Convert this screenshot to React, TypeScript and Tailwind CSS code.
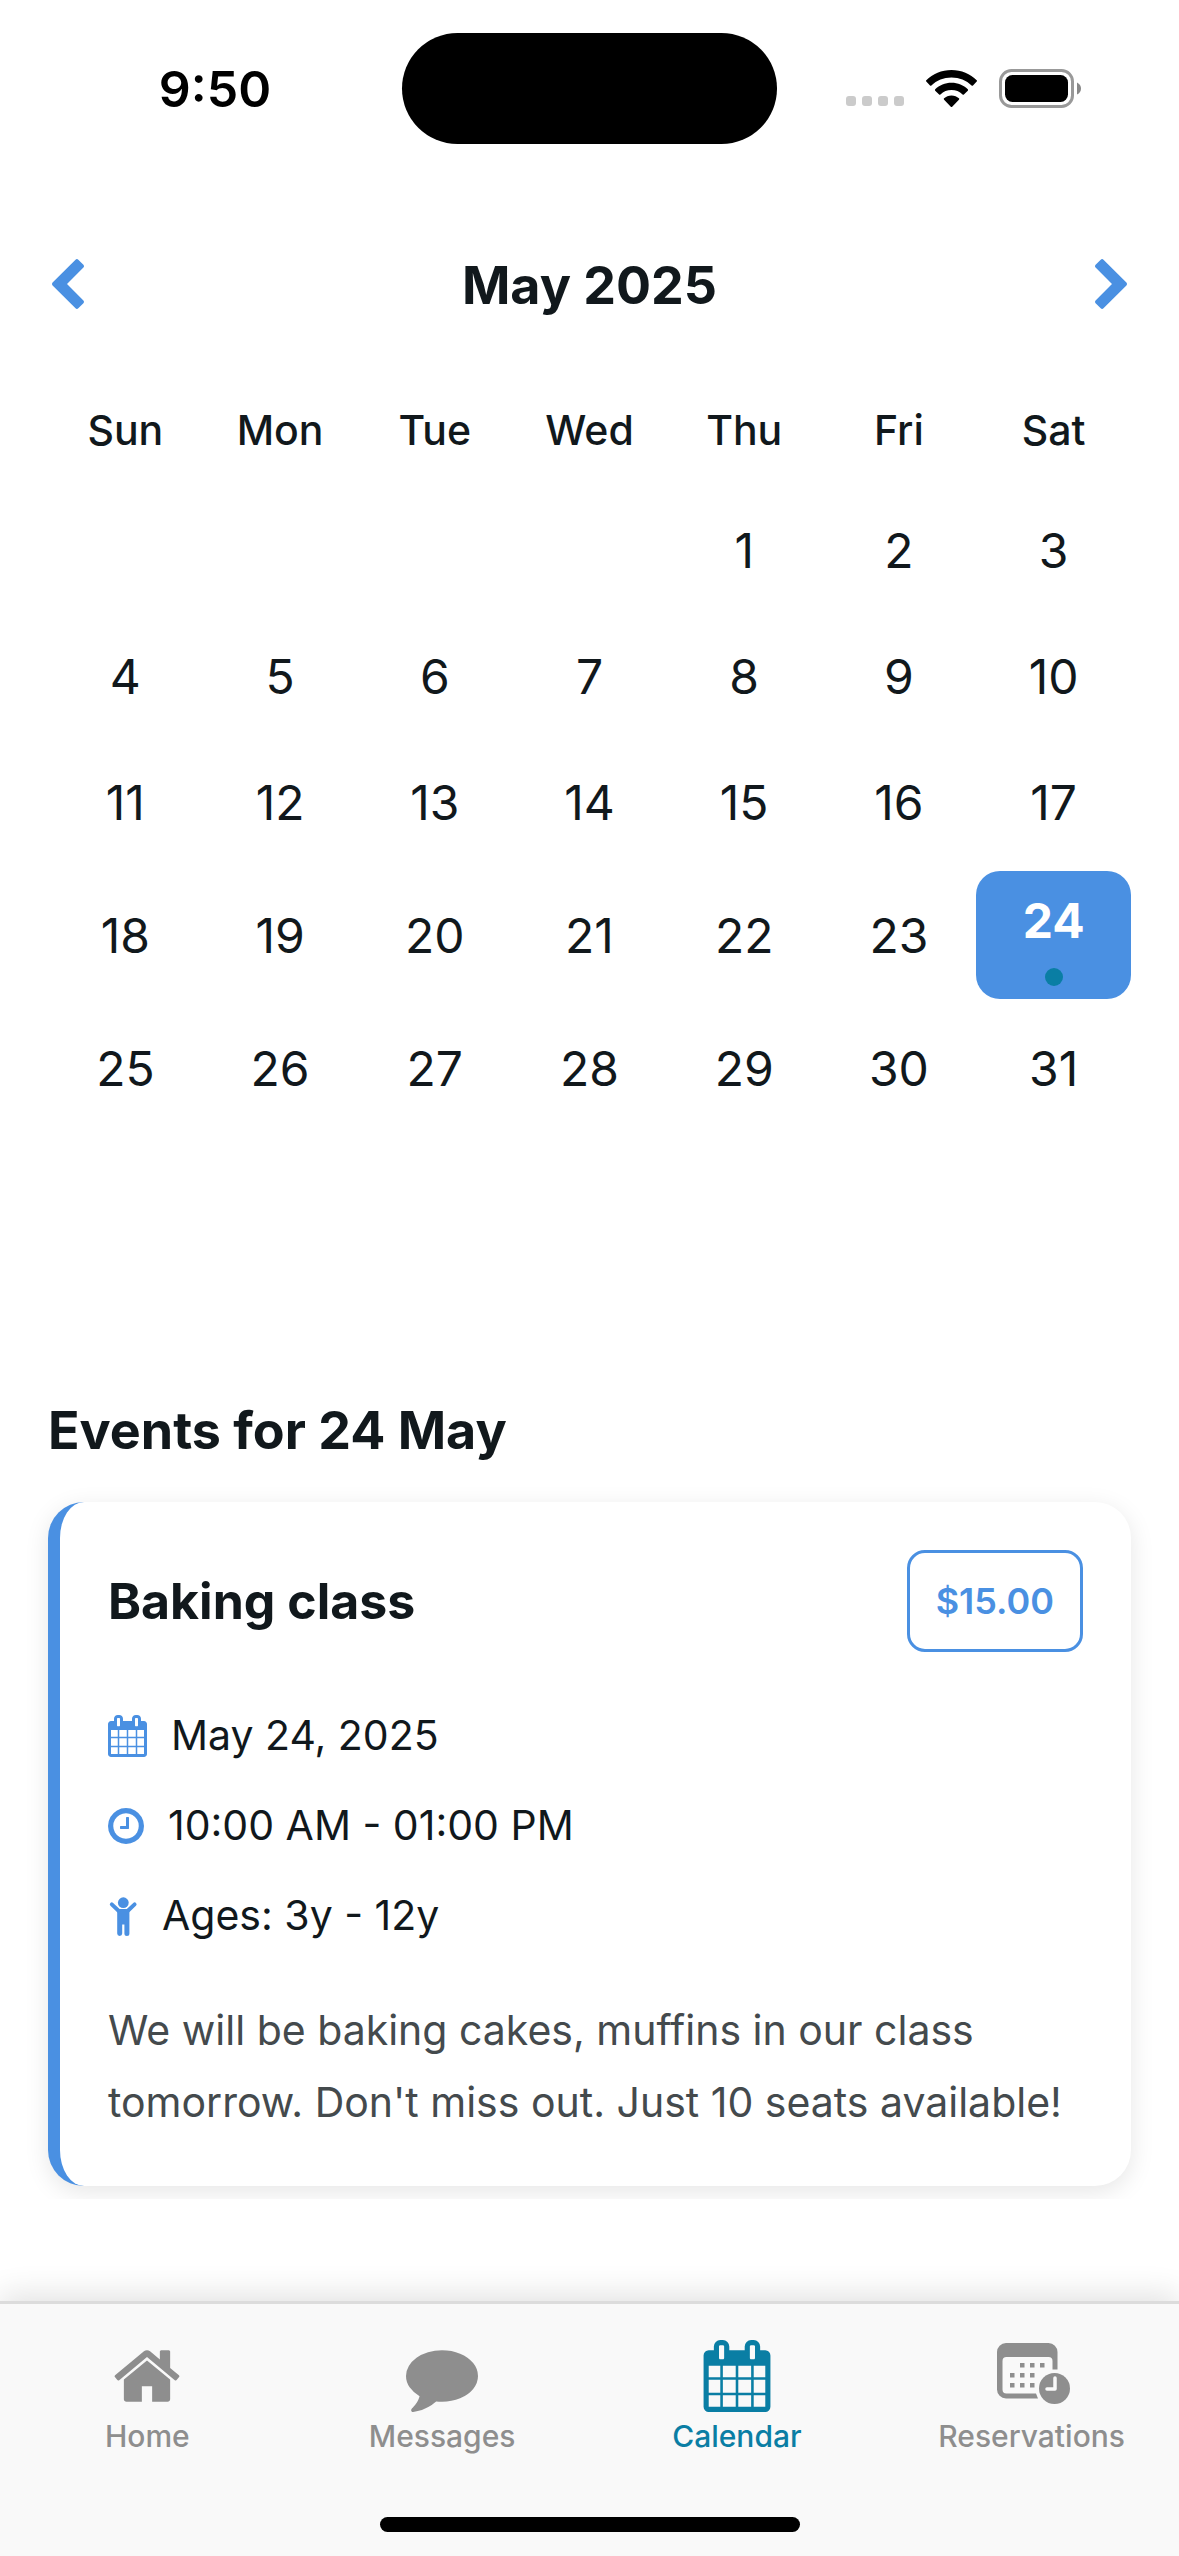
import type { ReactNode } from "react";

const weekdays = ["Sun", "Mon", "Tue", "Wed", "Thu", "Fri", "Sat"];
const firstWeekday = 4;
const daysInMonth = 31;
const selectedDay = 24;

const cells: (number | null)[] = [
  ...Array.from({ length: firstWeekday }, () => null),
  ...Array.from({ length: daysInMonth }, (_, i) => i + 1),
];

const CALENDAR =
  "M192 1664h288v-288h-288v288zm352 0h320v-288h-320v288zm-352-352h288v-320h-288v320zm352 0h320v-320h-320v320zm-352-384h288v-288h-288v288zm736 736h320v-288h-320v288zm-384-736h320v-288h-320v288zm768 736h288v-288h-288v288zm-384-352h320v-320h-320v320zm-352-864v-288q0-13-9.5-22.5t-22.5-9.5h-64q-13 0-22.5 9.5t-9.5 22.5v288q0 13 9.5 22.5t22.5 9.5h64q13 0 22.5-9.5t9.5-22.5zm736 864h288v-320h-288v320zm-384-384h320v-288h-320v288zm384 0h288v-288h-288v288zm32-480v-288q0-13-9.5-22.5t-22.5-9.5h-64q-13 0-22.5 9.5t-9.5 22.5v288q0 13 9.5 22.5t22.5 9.5h64q13 0 22.5-9.5t9.5-22.5zm384-64v1280q0 52-38 90t-90 38h-1408q-52 0-90-38t-38-90v-1280q0-52 38-90t90-38h128v-96q0-66 47-113t113-47h64q66 0 113 47t47 113v96h384v-96q0-66 47-113t113-47h64q66 0 113 47t47 113v96h128q52 0 90 38t38 90z";
const HOME =
  "M1472 992v480q0 26-19 45t-45 19h-384v-384h-256v384h-384q-26 0-45-19t-19-45v-480q0-1 .5-3t.5-3l575-474 575 474q1 2 1 6zm223-69l-62 74q-8 9-21 11h-3q-13 0-21-7l-692-577-692 577q-12 8-24 7-13-2-21-11l-62-74q-8-10-7-23.5t11-21.5l719-599q32-26 76-26t76 26l244 204v-195q0-14 9-23t23-9h192q14 0 23 9t9 23v408l219 182q10 8 11 21.5t-7 23.5z";
const COMMENT =
  "M1792 896q0 174-120 321.5t-326 233-450 85.5q-70 0-145-8-198 175-460 242-49 14-114 22-17 2-30.5-9t-17.5-29v-1q-3-4-.5-12t2-10 4.5-9.5l6-9 7-8.5 8-9q7-8 31-34.5t34.5-38 31-39.5 32.5-51 27-59 26-76q-157-89-247.5-220t-90.5-281q0-130 71-248.5t191-204.5 286-136.5 348-50.5q244 0 450 85.5t326 233 120 321.5z";
const CLOCK =
  "M1024 544v448q0 14-9 23t-23 9h-320q-14 0-23-9t-9-23v-64q0-14 9-23t23-9h224v-352q0-14 9-23t23-9h64q14 0 23 9t9 23zm416 352q0-148-73-273t-198-198-273-73-273 73-198 198-73 273 73 273 198 198 273 73 273-73 198-198 73-273zm224 0q0 209-103 385.5t-279.5 279.5-385.5 103-385.5-103-279.5-279.5-103-385.5 103-385.5 279.5-279.5 385.5-103 385.5 103 279.5 279.5 103 385.5z";
const CHEVRON_LEFT =
  "M1427 301l-531 531 531 531q19 19 19 45t-19 45l-166 166q-19 19-45 19t-45-19l-742-742q-19-19-19-45t19-45l742-742q19-19 45-19t45 19l166 166q19 19 19 45t-19 45z";

function Chevron({ flip = false }: { flip?: boolean }) {
  return (
    <svg viewBox="410 26 1036 1612" fill="currentColor" className={flip ? "h-[50px] w-8 -scale-x-100" : "h-[50px] w-8"} aria-hidden="true">
      <path d={CHEVRON_LEFT} />
    </svg>
  );
}

function ChildIcon() {
  return (
    <svg viewBox="0 0 30 42" className="h-[42px] w-[30px]" fill="currentColor" aria-hidden="true">
      <circle cx="15.300" cy="7.700" r="5.400" />
      <path
        d="M3.800 9.300 L10.800 16 H19.600 L26.600 9.300"
        fill="none"
        stroke="currentColor"
        strokeWidth="3.900"
        strokeLinecap="round"
        strokeLinejoin="round"
      />
      <path d="M9.200 14.200h12.200V38.500a2.500 2.500 0 0 1-5 0V29.500h-2.200V38.500a2.500 2.500 0 0 1-5 0z" />
    </svg>
  );
}

function ReservationIcon() {
  return (
    <svg viewBox="-4 0 78 72" className="h-[72px] w-[78px]" fill="currentColor" aria-hidden="true">
      <path
        fillRule="evenodd"
        d="M9 3h42.500a9 9 0 0 1 9 9v17.500h-5V21a4 4 0 0 0-4-4H9.500a4 4 0 0 0-4 4v28.500a4 4 0 0 0 4 4h29.500l2 5H9a9 9 0 0 1-9-9V12a9 9 0 0 1 9-9z"
      />
      <path d="M23 23h4.500v4.500H23zM33 23h4.500v4.500H33zM43 23h4.500v4.500H43zM13 33h4.500v4.500H13zM23 33h4.500v4.500H23zM33 33h4.500v4.500H33zM13 43h4.500v4.500H13zM23 43h4.500v4.500H23zM33 43h4.500v4.500H33z" />
      <circle cx="57.500" cy="48.500" r="15.500" />
      <path d="M58 38v11h-8" fill="none" stroke="#f9f9f9" strokeWidth="3.500" strokeLinecap="round" strokeLinejoin="round" />
    </svg>
  );
}

function TabGlyph({ d }: { d: string }) {
  return (
    <svg viewBox="0 0 1792 1792" className="size-[72px]" fill="currentColor" aria-hidden="true">
      <path d={d} />
    </svg>
  );
}

function StatusBar() {
  return (
    <header className="grid grid-cols-[1fr_375px_1fr] items-center pt-[33px] text-black">
      <div className="pl-7 text-center text-[50px] leading-[60px] font-semibold">9:50</div>
      <div className="h-[111px] rounded-full bg-black" />
      <div className="flex items-center justify-end gap-[22px] pr-[98px]">
        <div className="flex gap-1.5 pt-6">
          {[0, 1, 2, 3].map((i) => (
            <span key={i} className="size-[10px] rounded-[3px] bg-[#cbcbcb]" />
          ))}
        </div>
        <svg viewBox="0 0 51 37" className="h-[37px] w-[51px]" aria-label="Wi-Fi">
          <path d="M25.500 0C35.400 0 44.300 3.900 50.700 10.200q.6.700 0 1.400L47 15.500q-.7.600-1.400 0C40.400 10.600 33.300 7.600 25.500 7.600S10.600 10.600 5.400 15.500q-.7.600-1.400 0L.3 11.600q-.6-.7 0-1.400C6.700 3.900 15.600 0 25.500 0z" />
          <path d="M25.500 12.800c6.400 0 12.100 2.500 16.300 6.500q.7.700 0 1.400l-3.900 3.800q-.6.600-1.300 0a16 16 0 0 0-22.200 0q-.7.600-1.300 0L9.200 20.700q-.7-.7 0-1.400c4.200-4 9.900-6.500 16.300-6.500z" />
          <path d="M25.500 25.400c2.900 0 5.500 1.100 7.400 2.900q.7.700 0 1.400l-6.700 7q-.7.600-1.400 0l-6.700-7q-.7-.7 0-1.400c1.900-1.800 4.500-2.900 7.400-2.900z" />
        </svg>
        <svg viewBox="0 0 82 39" className="h-[39px] w-[82px]" aria-label="Battery">
          <rect x="1.500" y="1.500" width="72" height="36" rx="11" fill="none" stroke="#999" strokeWidth="3" />
          <rect x="6" y="6" width="63" height="27" rx="7.500" />
          <path d="M78 13.500q4 2 4 6t-4 6z" fill="#888" />
        </svg>
      </div>
    </header>
  );
}

function Detail({ icon, children }: { icon: ReactNode; children: ReactNode }) {
  return (
    <li className="flex items-center gap-6 leading-[51px]">
      <span className="text-[#4a90e2]">{icon}</span>
      <span>{children}</span>
    </li>
  );
}

const tabs = [
  { label: "Home", icon: <TabGlyph d={HOME} />, active: false },
  { label: "Messages", icon: <TabGlyph d={COMMENT} />, active: false },
  { label: "Calendar", icon: <TabGlyph d={CALENDAR} />, active: true },
  { label: "Reservations", icon: <ReservationIcon />, active: false },
];

export default function App() {
  return (
    <div className="flex min-h-screen flex-col bg-white font-['Inter',sans-serif] text-[#11181c]">
      <StatusBar />

      <main className="flex-1 overflow-hidden">
        <section aria-label="Calendar" className="px-12 pt-[105px]">
          <div className="flex items-center justify-between px-1">
            <button type="button" aria-label="Previous month" className="text-[#4a90e2]">
              <Chevron />
            </button>
            <h1 className="pt-1 text-[52px] leading-[66px] font-bold">May 2025</h1>
            <button type="button" aria-label="Next month" className="text-[#4a90e2]">
              <Chevron flip />
            </button>
          </div>

          <div className="mt-[84px] grid grid-cols-7 text-center text-[41px] leading-[54px] font-medium">
            {weekdays.map((d) => (
              <div key={d}>{d}</div>
            ))}
          </div>

          <div className="mt-9 grid grid-cols-7 gap-y-3 text-[48px] leading-[60px]">
            {cells.map((day, i) =>
              day === null ? (
                <span key={i} />
              ) : day === selectedDay ? (
                <button
                  key={i}
                  type="button"
                  aria-pressed="true"
                  className="flex h-32 flex-col items-center rounded-3xl bg-[#4a90e2] pt-5 font-bold text-white"
                >
                  {day}
                  <span className="mt-[17px] size-[18px] rounded-full bg-[#0a7ea4]" />
                </button>
              ) : (
                <button key={i} type="button" className="min-h-[114px] pt-0.5">
                  {day}
                </button>
              ),
            )}
          </div>
        </section>

        <section aria-label="Events" className="mt-[273px] overflow-hidden px-12 pb-[13px]">
          <h2 className="text-[52px] leading-[66px] font-bold">Events for 24 May</h2>

          <article className="mt-[38px] rounded-[36px] border-l-12 border-[#4a90e2] bg-white p-12 shadow-[0_6px_24px_rgba(0,0,0,0.1)]">
            <div className="flex items-center justify-between">
              <h3 className="text-[50px] leading-[60px] font-bold">Baking class</h3>
              <button
                type="button"
                className="h-[102px] rounded-[18px] border-3 border-[#4a90e2] px-[26px] text-[36px] font-semibold text-[#4a90e2]"
              >
                $15.00
              </button>
            </div>

            <ul className="mt-[58px] flex flex-col gap-[39px] text-[41px]">
              <Detail
                icon={
                  <svg viewBox="64 0 1664 1792" className="h-[42px] w-[39px]" fill="currentColor" aria-hidden="true">
                    <path d={CALENDAR} />
                  </svg>
                }
              >
                May 24, 2025
              </Detail>
              <Detail
                icon={
                  <svg viewBox="128 0 1536 1792" className="h-[42px] w-9" fill="currentColor" aria-hidden="true">
                    <path d={CLOCK} />
                  </svg>
                }
              >
                10:00 AM - 01:00 PM
              </Detail>
              <Detail icon={<ChildIcon />}>Ages: 3y - 12y</Detail>
            </ul>

            <p className="mt-[53px] text-[41px] leading-[72px] text-[#444a4d]">
              We will be baking cakes, muffins in our class tomorrow. Don't miss out. Just 10 seats available!
            </p>
          </article>
        </section>
      </main>

      <nav
        aria-label="Tabs"
        className="border-t-3 border-[#dcdcdc] bg-[#f9f9f9] pt-9 pb-6 shadow-[0_-6px_30px_rgba(0,0,0,0.12)]"
      >
        <div className="grid grid-cols-4">
          {tabs.map((t) => (
            <a
              key={t.label}
              href="#"
              aria-current={t.active ? "page" : undefined}
              className={
                t.active
                  ? "flex flex-col items-center gap-1.5 text-[30px] leading-9 font-medium text-[#0a7ea4]"
                  : "flex flex-col items-center gap-1.5 text-[30px] leading-9 font-medium text-[#8e8e8e]"
              }
            >
              {t.icon}
              {t.label}
            </a>
          ))}
        </div>
        <div className="mx-auto mt-[63px] h-[15px] w-[420px] rounded-full bg-black" />
      </nav>
    </div>
  );
}
